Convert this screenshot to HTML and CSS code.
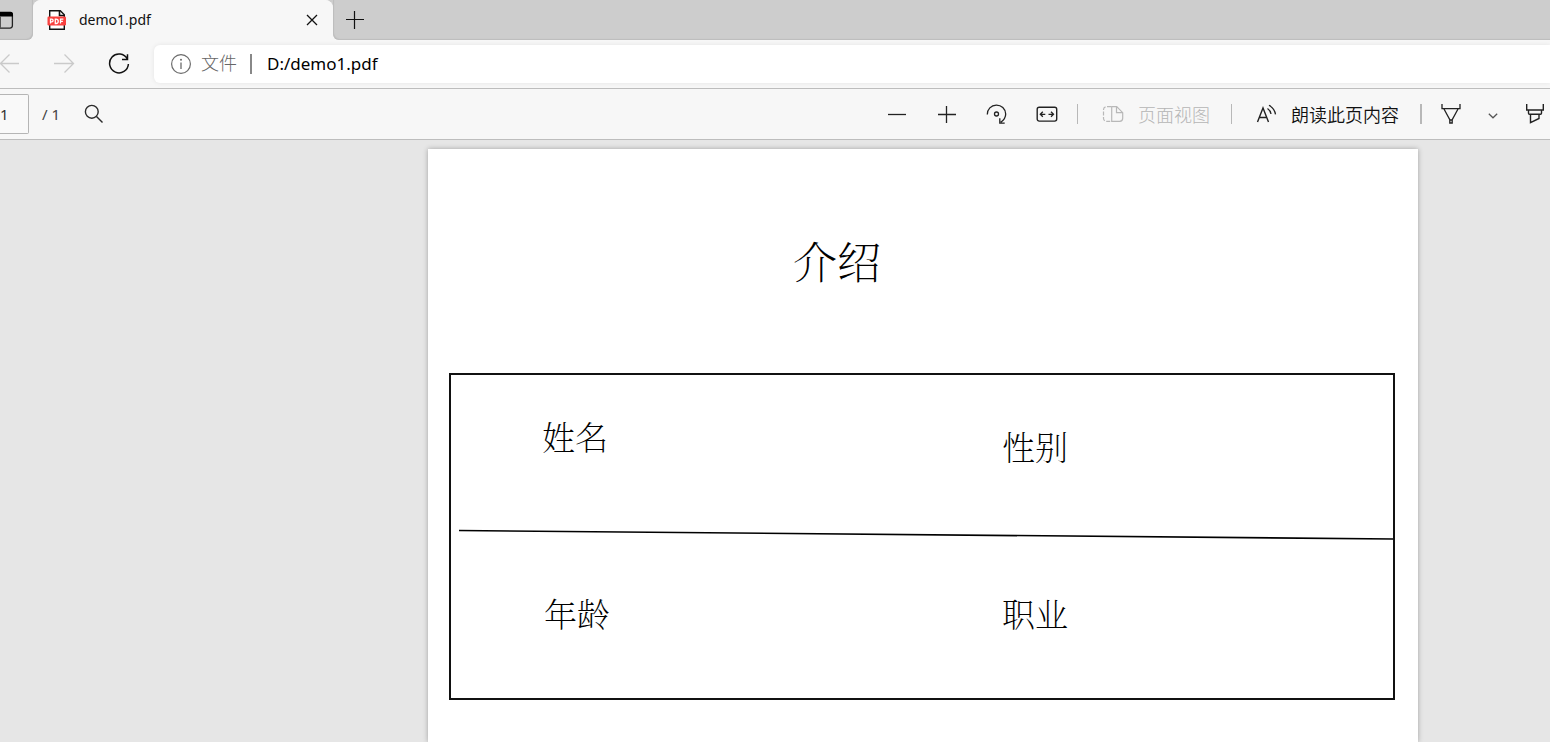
FILE: index.html
```html
<!DOCTYPE html>
<html lang="zh-CN">
<head>
<meta charset="utf-8">
<title>demo1.pdf</title>
<link rel="stylesheet" href="styles.css">
</head>
<body>
<header class="tabstrip">
  <button class="tab-actions" aria-label="标签页操作">
    <svg width="14" height="20" viewBox="0 0 14 20"><rect x="-6" y="2.600" width="18.400" height="15.500" rx="2.500" fill="none" stroke="#222" stroke-width="1.300"/><path d="M-6 1.800H10.500a2.500 2.500 0 0 1 2.500 2.500V6.500H-6z" fill="#000"/><path d="M.5 6V18" stroke="#555" stroke-width="1"/></svg>
  </button>
  <div class="tab">
    <svg class="tab-icon" width="20" height="20" viewBox="0 0 20 20"><path d="M2.700 8V.8h10.600l4 4V8M2.700 14v5.200h14.600V14" fill="#fff" stroke="#111" stroke-width="1.400"/><path d="M12.500 1v4.500H17" fill="none" stroke="#111" stroke-width="1.600"/><rect x=".5" y="6.500" width="18.500" height="9" rx="1.200" fill="#f8403e"/><path d="M3.500 13.500V9.200h1.300a1.200 1.200 0 0 1 0 2.600H3.500M8.300 9.200v4.300h.8a2.100 2.100 0 0 0 0-4.300zM13.500 13.500V9.200h2.900M13.500 11.400h2.400" fill="none" stroke="#fff" stroke-width="1.300"/></svg>
    <span class="tab-title">demo1.pdf</span>
    <button class="tab-close" aria-label="关闭"><svg width="12" height="12" viewBox="0 0 12 12"><path d="M1 1l10 10M11 1L1 11" stroke="#111" stroke-width="1.300"/></svg></button>
  </div>
  <button class="new-tab" aria-label="新建标签页"><svg width="18" height="18" viewBox="0 0 18 18"><path d="M8.500 0v18M0 8.500h18" stroke="#111" stroke-width="1.200"/></svg></button>
</header>
<nav class="navbar">
  <button class="nav-back" aria-label="后退"><svg width="20" height="20" viewBox="0 0 20 20"><path d="M19 9.500H1M9.500.5l-9 9 9 9" fill="none" stroke="#cacaca" stroke-width="1.300"/></svg></button>
  <button class="nav-btn" aria-label="前进"><svg width="22" height="20" viewBox="0 0 22 20"><path d="M1 9.500h19.500M11.500.5l9 9-9 9" fill="none" stroke="#cacaca" stroke-width="1.300"/></svg></button>
  <button class="nav-btn" aria-label="刷新"><svg width="22" height="22" viewBox="0 0 22 22"><path d="M19.300 6A9.400 9.400 0 1 0 20.400 11M19.500 1.200V6.500H14" fill="none" stroke="#111" stroke-width="1.500"/></svg></button>
  <div class="address">
    <svg width="22" height="22" viewBox="0 0 22 22"><circle cx="11" cy="11" r="9.400" fill="none" stroke="#6b6b6b" stroke-width="1.200"/><path d="M11 9.500v6.500" stroke="#6b6b6b" stroke-width="1.300"/><circle cx="11" cy="6.800" r="1" fill="#6b6b6b"/></svg>
    <span class="scheme">文件</span>
    <span class="address-rule"></span>
    <input class="url" type="text" value="D:/demo1.pdf" aria-label="地址">
  </div>
</nav>
<div class="toolbar">
  <input class="page-number" type="text" value="1" aria-label="页码">
  <span class="page-total">/ 1</span>
  <button class="find" aria-label="查找"><svg width="20" height="20" viewBox="0 0 20 20"><circle cx="7.800" cy="7.800" r="6.400" fill="none" stroke="#2b2b2b" stroke-width="1.400"/><path d="M12.500 12.500l6 6" stroke="#2b2b2b" stroke-width="1.400"/></svg></button>
  <div class="tools">
    <button class="zoom-btn" aria-label="缩小"><svg width="20" height="20" viewBox="0 0 20 20"><path d="M1 10.500h18" stroke="#222" stroke-width="1.300"/></svg></button>
    <button class="zoom-btn" aria-label="放大"><svg width="20" height="20" viewBox="0 0 20 20"><path d="M1 10.500h18M9.500 2v17" stroke="#222" stroke-width="1.300"/></svg></button>
    <button class="zoom-btn" aria-label="旋转"><svg width="22" height="22" viewBox="0 0 22 22"><path d="M1.300 11.500A9.200 9.200 0 0 1 19.700 11c0 3.400-2 6.200-4.900 8.200M13.800 15.200v4.900h4.900" fill="none" stroke="#222" stroke-width="1.300"/><circle cx="10.500" cy="11" r="2" fill="none" stroke="#222" stroke-width="1.300"/></svg></button>
    <button class="zoom-btn" aria-label="适合宽度"><svg width="22" height="22" viewBox="0 0 22 22"><rect x="1.200" y="4.300" width="19.500" height="13.800" rx="2" fill="none" stroke="#222" stroke-width="1.400"/><path d="M4.300 11.300h5M6.800 8.800l-2.500 2.500 2.500 2.500M12.500 11.300h5M15 8.800l2.500 2.500-2.500 2.500" fill="none" stroke="#222" stroke-width="1.300"/></svg></button>
    <span class="rule"></span>
    <button class="text-btn muted"><svg width="22" height="20" viewBox="0 0 22 20"><path d="M9 2.700H4.500a3 3 0 0 0-3 3v8.600a3 3 0 0 0 3 3H9" fill="none" stroke="#b8b8b8" stroke-width="1.200" stroke-dasharray="4 1.500"/><path d="M9.700 2.700h5l6 6V14.300a3 3 0 0 1-3 3h-8zM14.500 2.700v6h6" fill="none" stroke="#b8b8b8" stroke-width="1.200"/></svg>页面视图</button>
    <span class="rule"></span>
    <button class="text-btn read-aloud"><svg width="21" height="20" viewBox="0 0 21 20"><path d="M1.500 18L7 4l5.500 14M3.500 13.500h7" fill="none" stroke="#222" stroke-width="1.400"/><path d="M11.500 4.500q3 2 3.500 5.500M13 1.300q5.500 3 6.500 9" fill="none" stroke="#222" stroke-width="1.300"/></svg>朗读此页内容</button>
    <span class="rule rule-wide"></span>
    <button class="pen-btn" aria-label="绘制"><svg width="22" height="22" viewBox="0 0 22 22"><path d="M2 1v4.600h18V1M4 6l6 11h2l6-11M9.800 16.500v3.500h2.400v-3.500" fill="none" stroke="#222" stroke-width="1.300"/></svg></button>
    <button class="pen-btn" aria-label="绘制选项"><svg width="10" height="10" viewBox="0 0 10 10"><path d="M.8 4.700L5 8.800 9.200 4.700" fill="none" stroke="#555" stroke-width="1.200"/></svg></button>
    <button class="pen-btn" aria-label="突出显示"><svg width="22" height="22" viewBox="0 0 22 22"><path d="M2.700 1v6h16.600V1M4.500 7.300v2.900q0 1 1 1h11q1 0 1-1V7.300M6.500 11.300v8.400l8.500-4.200v-4.200" fill="none" stroke="#222" stroke-width="1.400"/></svg></button>
  </div>
</div>
<main class="viewer">
  <article class="sheet">
    <h1 class="sheet-title">介绍</h1>
    <section class="form">
      <div class="cell">姓名</div>
      <div class="cell cell-low">性别</div>
      <div class="cell">年龄</div>
      <div class="cell">职业</div>
      <svg class="divider" viewBox="0 0 944 324" preserveAspectRatio="none"><path d="M8 156L944 164.500" stroke="#000" stroke-width="1.600"/></svg>
    </section>
  </article>
</main>
</body>
</html>
```
FILE: styles.css
```css
* { box-sizing: border-box; }

body {
  margin: 0;
  height: 100vh;
  overflow: hidden;
  display: flex;
  flex-direction: column;
  background: #e6e6e6;
  color: #111;
  font-family: "Noto Sans", "Noto Sans CJK SC", sans-serif;
}

button {
  display: flex;
  align-items: center;
  justify-content: center;
  flex: none;
  padding: 0;
  border: 0;
  background: none;
  color: inherit;
  font: inherit;
}

input { font: inherit; outline: 0; }
svg { display: block; flex: none; }

.tabstrip {
  display: flex;
  height: 40px;
  flex: none;
  background: #f7f7f7;
}

.tab-actions {
  width: 33px;
  justify-content: flex-start;
  background: #cdcdcd;
  border-bottom-right-radius: 6px;
  box-shadow: inset -1px -1px 1px #bdbdbd;
}

.tab {
  display: flex;
  align-items: center;
  width: 300px;
  padding: 0 14px;
  background: radial-gradient(circle at 50% 100%, #f7f7f7, #f7f7f7);
  box-shadow: 0 -8px 0 0 #cdcdcd;
  border-radius: 8px 8px 0 0;
}

.tab-title {
  flex: 1;
  padding-left: 12px;
  font-size: 14px;
  line-height: 20px;
}

.tab-close { width: 14px; height: 20px; }

.new-tab {
  flex: 1;
  justify-content: flex-start;
  padding-left: 13px;
  background: #cdcdcd;
  border-bottom-left-radius: 6px;
  box-shadow: inset 1px -1px 1px #bdbdbd;
}

.navbar {
  display: flex;
  align-items: center;
  height: 49px;
  flex: none;
  background: #f7f7f7;
  border-bottom: 1px solid #bdbdbd;
}

.nav-back { width: 36px; height: 40px; justify-content: flex-start; }
.nav-btn { width: 55px; height: 40px; }

.address {
  display: flex;
  align-items: center;
  flex: 1;
  height: 38px;
  margin-left: 8px;
  padding-left: 16px;
  background: #fff;
  border-radius: 6px 0 0 6px;
  box-shadow: 0 0 5px rgba(0, 0, 0, 0.08);
}

.scheme {
  padding: 0 0 2px 9px;
  color: #666;
  font-size: 18px;
  font-weight: 300;
  line-height: 24px;
}

.address-rule {
  width: 2px;
  height: 20px;
  margin: 0 15px 0 13px;
  background: #888;
}

.url {
  flex: 1;
  min-width: 0;
  padding: 0 0 2px;
  border: 0;
  color: #000;
  font-size: 17px;
  background: none;
}

.toolbar {
  display: flex;
  align-items: center;
  height: 51px;
  flex: none;
  background: #f7f7f7;
  border-bottom: 1px solid #bdbdbd;
}

.page-number {
  width: 29px;
  height: 40px;
  padding: 0;
  border: 1px solid #b5b5b5;
  border-left: 0;
  border-radius: 0 2px 2px 0;
  background: #f9f9f9;
  color: #333;
  font-size: 15px;
}

.page-total {
  width: 55px;
  padding-left: 13px;
  color: #444;
  font-size: 15px;
}

.find { height: 40px; }

.tools {
  display: flex;
  align-items: center;
  margin-left: auto;
}

.zoom-btn { width: 50px; height: 40px; }

.rule {
  width: 1px;
  height: 20px;
  margin: 0 5px;
  background: #b8b8b8;
}

.rule-wide { width: 2px; margin: 0 14px 0 0; }

.text-btn {
  height: 40px;
  gap: 14px;
  padding: 0 19px;
  font-size: 18px;
  font-weight: 300;
}

.muted { color: #b5b5b5; padding-right: 16px; }
.read-aloud { padding-right: 21px; font-weight: 350; }
.pen-btn { width: 30px; height: 40px; margin-right: 12px; }
.pen-btn:last-child { margin-right: 0; }

.viewer {
  display: flex;
  flex: 1;
  min-height: 0;
  padding: 9px 132px 0 428px;
}

.sheet {
  flex: 1;
  padding: 77px 23px 0 21px;
  background: #fff;
  box-shadow: 0 0 5px rgba(0, 0, 0, 0.3);
  color: #000;
  font-family: "Noto Serif CJK SC", "Noto Sans CJK SC", serif;
  font-weight: 100;
}

.sheet-title {
  margin: 0;
  padding-left: 344px;
  font-size: 44px;
  font-weight: inherit;
  line-height: 68px;
}

.form {
  position: relative;
  display: grid;
  grid-template-columns: 460fr 484fr;
  grid-template-rows: 168px 155px;
  margin-top: 79px;
  border: 2px solid #111;
}

.cell {
  padding: 41px 0 0 92px;
  font-size: 33px;
  line-height: 40px;
}

.cell:nth-child(odd) { padding-left: 91px; }

.cell-low { padding-top: 51px; }

.cell:nth-child(3) { padding-left: 93px; }

.cell:nth-child(n+3) { padding-top: 50px; }

.divider {
  position: absolute;
  inset: 0;
  width: 100%;
  height: 100%;
}
```
